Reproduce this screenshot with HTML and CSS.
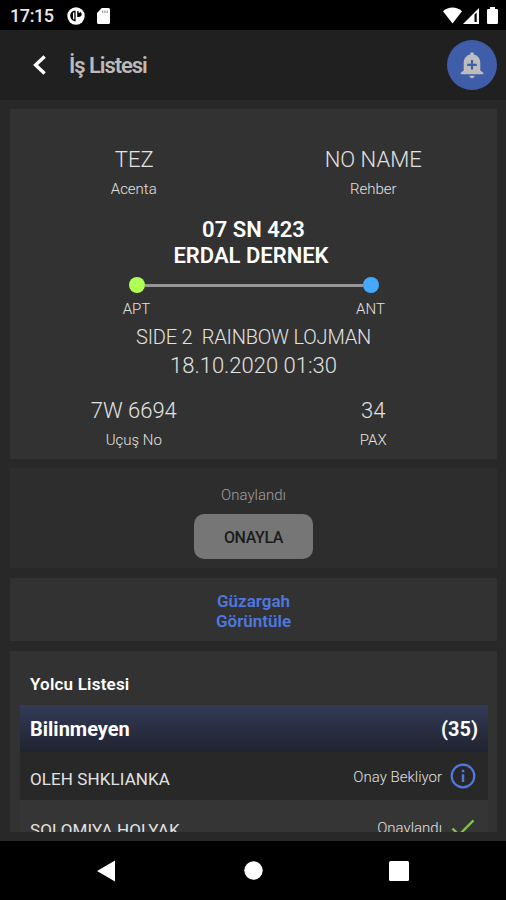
FILE: index.html
```html
<!DOCTYPE html>
<html lang="tr">
<head>
<meta charset="UTF-8">
<meta name="viewport" content="width=device-width, initial-scale=1.0">
<title>İş Listesi</title>
<link rel="stylesheet" href="styles.css">
</head>
<body>

<div class="status-bar">
<span class="clock">17:15</span>
<svg class="status-app" width="18" height="18" viewBox="0 0 18 18"><circle cx="9" cy="9" r="8.7" fill="#fff"/><path d="M8.600 3.800H6.800C4.600 4.500 3.200 6.300 3.200 8.800s1.800 5 4.400 5.400h1z" fill="#000"/><path d="M6 5.600h1.300v6.600H6z" fill="#fff"/><path d="M10.200 4h1.300v1.700h1.600V4.800c1 .6 1.600 1.600 1.600 2.800 0 1.500-1.200 2.500-3 2.500h-1.500z" fill="#000"/></svg>
<svg class="status-sd" width="13" height="16" viewBox="0 0 13 16"><path d="M4.800 0H11.500a1.500 1.500 0 0 1 1.500 1.500V14.500A1.500 1.500 0 0 1 11.500 16H1.500A1.500 1.500 0 0 1 0 14.500V5z" fill="#fff"/><path d="M5 2.500h1.200V5H5zM7.300 2.500h1.200V5H7.300zM9.600 2.500h1.200V5H9.600z" fill="#999"/></svg>
<svg class="status-wifi" width="19" height="17" viewBox="0 0 19 17"><path d="M0 4.200C5.500-.8 13.500-.8 19 4.200L9.500 16.500z" fill="#fff"/></svg>
<svg class="status-signal" width="16" height="16" viewBox="0 0 16 16"><path d="M16 0v16H0z" fill="#fff"/><path d="M11.500 6.500L13.700 4.500V14h-2.200z" fill="#000"/></svg>
<svg class="status-battery" width="11" height="17" viewBox="0 0 11 17"><path d="M3 0h5v2h1.800A1.200 1.200 0 0 1 11 3.200v12.600A1.200 1.200 0 0 1 9.800 17H1.200A1.200 1.200 0 0 1 0 15.800V3.200A1.200 1.200 0 0 1 1.200 2H3z" fill="#fff"/></svg>
</div>

<header class="header">
<svg class="back" width="14" height="20" viewBox="0 0 14 20"><path d="M11.600 1.500L2.600 10l9 8.500" fill="none" stroke="#fff" stroke-width="3.400"/></svg>
<h1 class="title">İş Listesi</h1>
<button class="bell-button">
<svg width="24" height="28" viewBox="0 0 24 28"><path d="M12 1.200c1.200 0 1.900.9 2 2.200 3.800 1 6.300 4 6.300 8.300v7.800l3 2.200v1.500H.700v-1.500l3-2.200v-7.800c0-4.300 2.500-7.300 6.300-8.300.1-1.300.8-2.200 2-2.200z" fill="#bdbdbd"/><path d="M9.400 24.700h5.200c-.3 1.600-1.200 2.500-2.600 2.500s-2.300-.9-2.600-2.500z" fill="#bdbdbd"/><path d="M12 9v9.600M7.200 13.800h9.600" stroke="#3f5da9" stroke-width="2.200"/></svg>
</button>
</header>

<main class="content">

<!-- Transfer details -->
<section class="card transfer">
<div class="columns">
<div class="info"><div class="value tez">TEZ</div><div class="label">Acenta</div></div>
<div class="info"><div class="value">NO NAME</div><div class="label">Rehber</div></div>
</div>
<div class="plate">07 SN 423</div>
<div class="plate driver">ERDAL DERNEK</div>
<div class="route">
<div class="track"><span class="dot from"></span><span class="line"></span><span class="dot to"></span></div>
<div class="stops"><span>APT</span><span>ANT</span></div>
</div>
<div class="hotel">SIDE 2&nbsp; RAINBOW LOJMAN</div>
<div class="date">18.10.2020 01:30</div>
<div class="columns flight">
<div class="info"><div class="value">7W 6694</div><div class="label">Uçuş No</div></div>
<div class="info"><div class="value">34</div><div class="label">PAX</div></div>
</div>
</section>

<!-- Approval -->
<section class="card approval">
<div class="state">Onaylandı</div>
<button class="approve-button" disabled>ONAYLA</button>
</section>

<a class="card route-link">Güzargah<br>Görüntüle</a>

<!-- Passenger list -->
<section class="card passengers">
<h2 class="list-title">Yolcu Listesi</h2>
<div class="group"><span>Bilinmeyen</span><span class="count">(35)</span></div>
<div class="row dark">
<span class="name">OLEH SHKLIANKA</span>
<span class="status">Onay Bekliyor</span>
<svg width="26" height="26" viewBox="0 0 26 26"><circle cx="13" cy="13" r="11.300" fill="none" stroke="#5078e0" stroke-width="2.200"/><path d="M13 11.300v7.700M13 6.800v2.500" stroke="#5078e0" stroke-width="2.500"/></svg>
</div>
<div class="row second">
<span class="name">SOLOMIYA HOLYAK</span>
<span class="status">Onaylandı</span>
<svg width="26" height="26" viewBox="0 0 26 26"><path d="M2.500 13.500l6.500 6.500L23.500 5.300" fill="none" stroke="#83bf4f" stroke-width="2.400"/></svg>
</div>
</section>

</main>

<nav class="nav-bar">
<svg width="18" height="22" viewBox="0 0 18 22"><path d="M18 .5v21L0 11z" fill="#fff"/></svg>
<svg class="home" width="19" height="19" viewBox="0 0 19 19"><circle cx="9.500" cy="9.500" r="9.200" fill="#fff"/></svg>
<svg width="20" height="20" viewBox="0 0 20 20"><rect width="20" height="20" rx="1.500" fill="#fff"/></svg>
</nav>

</body>
</html>
```
FILE: styles.css
```css
* {
box-sizing: border-box;
}

body {
display: flex;
flex-direction: column;
margin: 0;
height: 900px;
overflow: hidden;
background: #282828;
color: #e2e2e2;
font-family: Roboto, "Noto Sans", sans-serif;
white-space: nowrap;
}

h1, h2 {
margin: 0;
}

button {
padding: 0;
border: none;
font-family: inherit;
}

svg {
display: block;
flex-shrink: 0;
}

/* Android status bar */
.status-bar {
display: flex;
align-items: center;
flex-shrink: 0;
height: 30px;
padding: 1px 8px 0 10px;
background: #000;
}

.clock {
width: 57px;
font-size: 18px;
font-weight: 500;
letter-spacing: -0.4px;
color: #e8e8e8;
}

.status-sd {
margin-left: 12px;
}

.status-wifi {
margin-left: auto;
}

.status-signal {
margin-left: 1px;
}

.status-battery {
margin-left: 8px;
}

/* Header */
.header {
display: flex;
align-items: center;
flex-shrink: 0;
height: 70px;
padding: 0 9px 0 33px;
background: #202020;
}

.title {
margin-left: 22px;
font-size: 22px;
font-weight: 600;
letter-spacing: -1.05px;
color: #bababa;
}

.bell-button {
display: flex;
align-items: center;
justify-content: center;
width: 50px;
height: 50px;
margin-left: auto;
border-radius: 50%;
background: #3f5da9;
}

/* Cards */
.content {
height: 732px;
margin-bottom: 9px;
padding: 9px 9px 0 10px;
overflow: hidden;
}

.card {
display: block;
margin-bottom: 9px;
background: #323232;
text-align: center;
}

.transfer {
height: 350px;
padding: 36px 4px 0;
}

.columns {
display: grid;
grid-template-columns: 1fr 1fr;
}

.value {
font-size: 22px;
font-weight: 300;
line-height: 29px;
}

.tez {
padding-left: 1px;
}

.label {
font-size: 15px;
font-weight: 300;
line-height: 30px;
}

.plate {
margin-top: 13px;
font-size: 22px;
font-weight: 600;
line-height: 26px;
color: #fff;
}

.driver {
margin: 0;
padding-right: 5px;
}

.route {
width: 268px;
margin: 8px auto 0;
}

.track {
display: flex;
align-items: center;
padding: 0 9px;
}

.dot {
width: 16px;
height: 16px;
border-radius: 50%;
}

.from {
background: #b0ff55;
}

.to {
background: #45aaff;
}

.line {
flex: 1;
height: 3px;
background: #969696;
}

.stops {
display: flex;
justify-content: space-between;
margin-top: 6px;
font-size: 15px;
font-weight: 300;
line-height: 20px;
}

.stops span {
width: 34px;
}

.hotel {
margin-top: 4px;
font-size: 20px;
font-weight: 300;
line-height: 29px;
letter-spacing: -0.2px;
}

.date {
font-size: 22px;
font-weight: 300;
line-height: 28px;
}

.flight {
margin-top: 16px;
}

.approval {
height: 100px;
padding-top: 17px;
background: #2d2d2d;
}

.state {
font-size: 15px;
font-weight: 300;
line-height: 21px;
color: #a0a0a0;
}

.approve-button {
width: 119px;
height: 45px;
margin-top: 8px;
padding-top: 1px;
border-radius: 10px;
background: #767676;
font-size: 16px;
font-weight: 500;
letter-spacing: -0.4px;
color: #1c1c1c;
}

.route-link {
height: 63px;
margin-top: 10px;
padding-top: 13px;
font-size: 17px;
font-weight: 600;
line-height: 20px;
color: #4f78df;
}

/* Passenger list */
.passengers {
margin-top: 10px;
padding: 21px 9px 0 10px;
}

.list-title {
padding-left: 10px;
font-size: 17px;
font-weight: 600;
line-height: 24px;
letter-spacing: 0.2px;
text-align: left;
color: #fff;
}

.group {
display: flex;
align-items: center;
justify-content: space-between;
height: 47px;
margin-top: 9px;
padding: 0 10px;
background: linear-gradient(#323a56, #20232f);
font-size: 20px;
font-weight: 700;
color: #fff;
}

.row {
display: flex;
align-items: center;
height: 48px;
padding: 0 12px 0 10px;
background: #353535;
}

.dark {
background: #282828;
}

.name {
padding-top: 5px;
font-size: 17px;
letter-spacing: 0.1px;
}

.status {
padding-top: 1px;
margin: 0 8px 0 auto;
font-size: 15px;
font-weight: 300;
}

.second {
height: 55px;
}

/* Android navigation bar */
.nav-bar {
display: flex;
align-items: center;
justify-content: space-between;
flex-shrink: 0;
height: 59px;
padding: 0 97px;
background: #000;
}

.home {
margin-left: 2px;
}
```
